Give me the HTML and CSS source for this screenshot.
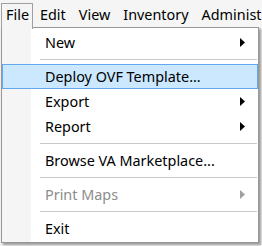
FILE: index.html
```html
<!DOCTYPE html>
<html>
<head>
<meta charset="utf-8">
<link rel="stylesheet" href="styles.css">
</head>
<body>
<div class="screen">
  <div class="menubar">
    <div class="mb-item active">File</div>
    <div class="mb-item">Edit</div>
    <div class="mb-item">View</div>
    <div class="mb-item">Inventory</div>
    <div class="mb-item">Administ</div>
  </div>
  <div class="menu">
    <div class="item"><span class="label">New</span><svg class="arrow" width="5" height="9" viewBox="0 0 5 9"><polygon points="0,0 5,4.5 0,9" fill="#000"/></svg></div>
    <div class="sep"></div>
    <div class="item hot"><span class="label">Deploy OVF Template...</span></div>
    <div class="item"><span class="label">Export</span><svg class="arrow" width="5" height="9" viewBox="0 0 5 9"><polygon points="0,0 5,4.5 0,9" fill="#000"/></svg></div>
    <div class="item"><span class="label">Report</span><svg class="arrow" width="5" height="9" viewBox="0 0 5 9"><polygon points="0,0 5,4.5 0,9" fill="#000"/></svg></div>
    <div class="sep"></div>
    <div class="item"><span class="label">Browse VA Marketplace...</span></div>
    <div class="sep"></div>
    <div class="item disabled"><span class="label">Print Maps</span><svg class="arrow" width="5" height="9" viewBox="0 0 5 9"><polygon points="0,0 5,4.5 0,9" fill="#a0a0a0"/></svg></div>
    <div class="sep"></div>
    <div class="item"><span class="label">Exit</span></div>
  </div>
</div>
</body>
</html>
```
FILE: styles.css
```css
html, body {
  margin: 0;
  padding: 0;
  background: #f0f0f0;
}
.screen {
  width: 262px;
  height: 246px;
  overflow: hidden;
  font-family: "Noto Sans", "Open Sans", sans-serif;
  font-size: 14.4px;
  color: #000;
}
.menubar {
  height: 27px;
  display: flex;
  align-items: flex-start;
  background: #f5f5f5;
  white-space: nowrap;
}
.mb-item {
  margin-top: 3px;
  height: 24px;
  line-height: 21px;
  padding: 0 5px 0 6px;
  border: 1px solid transparent;
  border-bottom: none;
}
.mb-item.active {
  margin-left: 1px;
  padding: 0 3px 0 4px;
  border-color: #a0a0a0;
  background: #f5f5f5;
  position: relative;
  z-index: 1;
  height: 25px;
  margin-bottom: -1px;
}
.menu {
  margin-left: 1px;
  width: 256px;
  height: 212px;
  border: 1px solid #979797;
  background: linear-gradient(to right, #f5f5f5 0, #f5f5f5 29px, #fff 29px);
  box-shadow: 2px 2px 2px rgba(0,0,0,0.35);
  padding-top: 2px;
  box-sizing: content-box;
}
.item {
  height: 25px;
  display: flex;
  align-items: center;
  padding-left: 42px;
  padding-right: 12px;
  border: 1px solid transparent;
  box-sizing: border-box;
}
.item .label {
  flex: 1;
  white-space: nowrap;
}
.item.hot {
  background: #cce8ff;
  border-color: #62a8f0;
}
.item.disabled {
  color: #8c8c8c;
}
.sep {
  height: 9px;
  display: flex;
  align-items: center;
  padding-left: 38px;
  padding-right: 1px;
}
.sep::before {
  content: "";
  flex: 1;
  height: 1px;
  background: #c8c8c8;
}
```
